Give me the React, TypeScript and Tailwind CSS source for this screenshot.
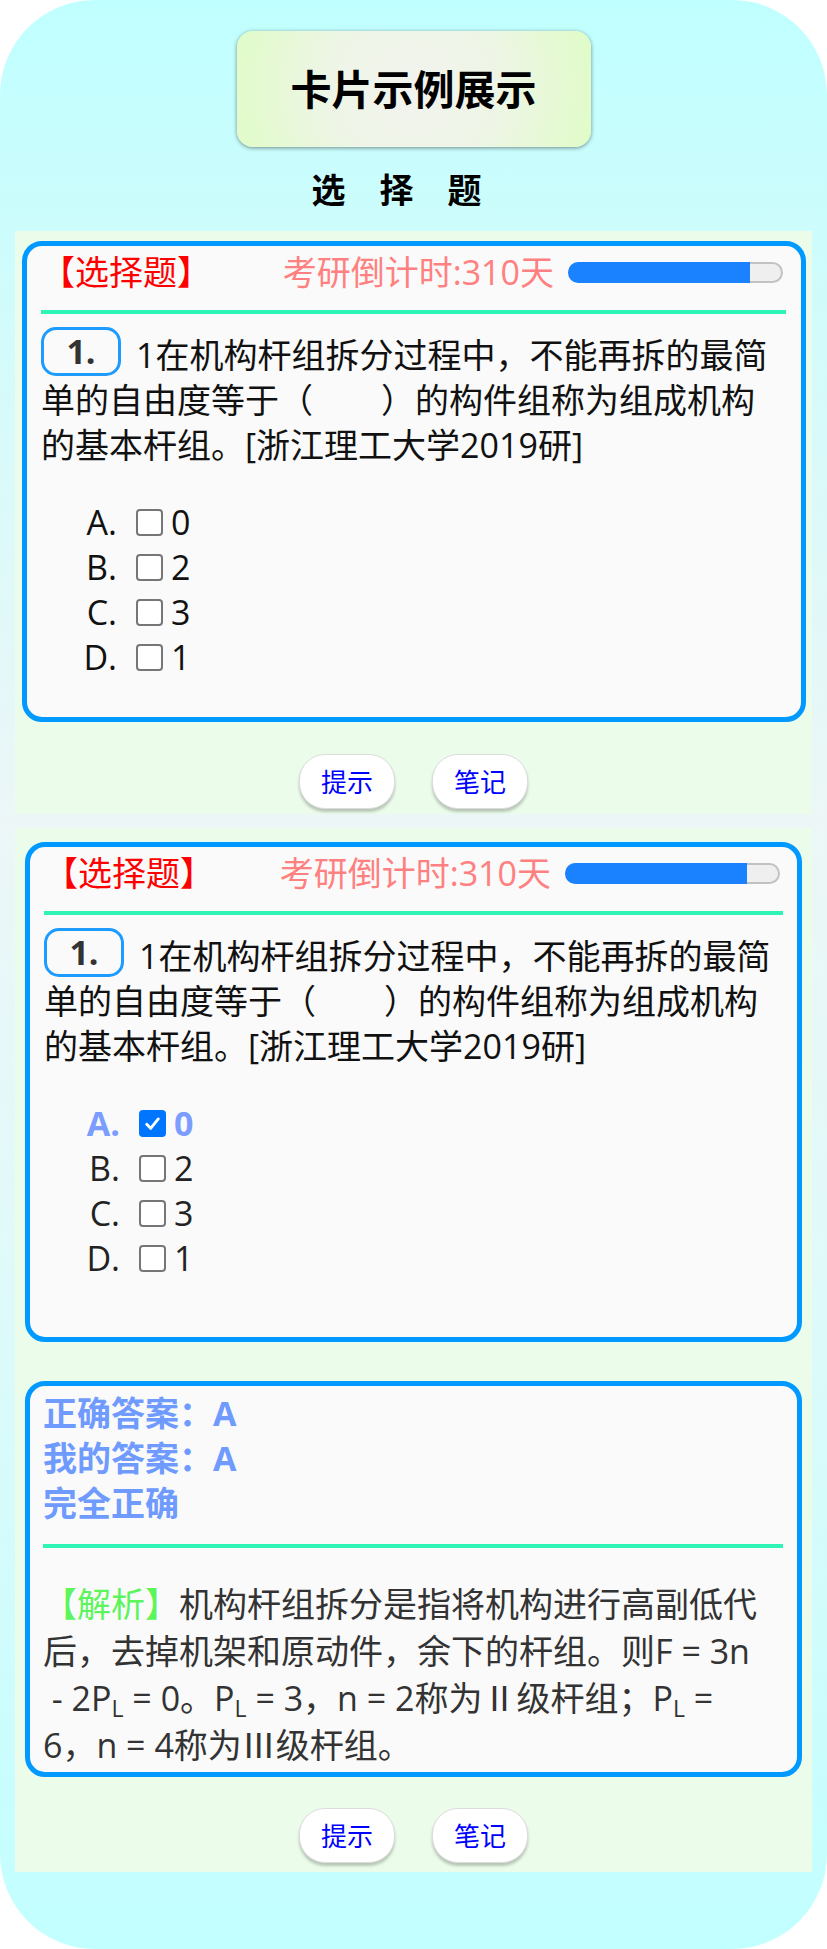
import React from 'react';

interface Option {
  key: string;
  text: string;
}

const OPTIONS: Option[] = [
  { key: 'A', text: '0' },
  { key: 'B', text: '2' },
  { key: 'C', text: '3' },
  { key: 'D', text: '1' },
];

const CheckBox: React.FC<{ checked?: boolean }> = ({ checked }) => {
  if (checked) {
    return (
      <span className="ml-[19px] flex h-[27px] w-[27px] shrink-0 items-center justify-center rounded-[4px] bg-[#0075ff]">
        <svg viewBox="0 0 16 16" className="h-[21px] w-[21px]">
          <path
            d="M3.6 8.6l3 3.1 5.8-7.2"
            fill="none"
            stroke="#fff"
            strokeWidth="2.2"
            strokeLinecap="round"
            strokeLinejoin="round"
          />
        </svg>
      </span>
    );
  }
  return (
    <span className="ml-[19px] block h-[27px] w-[27px] shrink-0 rounded-[4px] border-2 border-[#767676] bg-white" />
  );
};

const CardHeader: React.FC = () => (
  <div className="flex h-[52px] items-center justify-between text-[34px] leading-[45px]">
    <span className="text-[#ff0000]">【选择题】</span>
    <div className="mr-[3px] flex items-center">
      <span className="text-[#ff8080]">考研倒计时:310天</span>
      <div className="relative ml-[14px] h-[21px] w-[215px] rounded-full border-2 border-[#c2c2c2] bg-[#efefef]">
        <div className="absolute -left-[2px] -top-[2px] h-[21px] w-[182px] rounded-l-full bg-[#1a82ff]" />
      </div>
    </div>
  </div>
);

interface QuestionCardProps {
  answered?: boolean;
}

const QuestionCard: React.FC<QuestionCardProps> = ({ answered }) => {
  return (
    <>
      <CardHeader />
      <div className="mt-[12px] h-[4px] bg-[#2ef5b6]" />
      <div className="mt-[13px] text-[34px] leading-[45px] text-[#111]">
        <p>
          <span className="mr-[15px] inline-block h-[49px] w-[80px] rounded-[15px] border-[3px] border-[#1d9bff] text-center align-[4px] text-[34px] font-bold leading-[43px] text-[#333]">
            1.
          </span>
          <span>1在机构杆组拆分过程中，不能再拆的最简</span>
        </p>
        <p>单的自由度等于（　　）的构件组称为组成机构的基本杆组。[浙江理工大学2019研]</p>
      </div>
      <div className="mt-[32px] text-[34px] leading-[45px]">
        {OPTIONS.map((o) => {
          const picked = answered && o.key === 'A';
          return (
            <div
              key={o.key}
              className={`flex h-[45px] items-center ${picked ? 'font-bold text-[#7b9dff]' : answered ? 'text-[#222]' : 'text-[#111]'}`}
            >
              <span className="w-[76px] text-right">{o.key}.</span>
              <CheckBox checked={picked} />
              <span className="ml-[8px]">{o.text}</span>
            </div>
          );
        })}
      </div>
    </>
  );
};

const ActionButtons: React.FC = () => (
  <div className="flex justify-center gap-[37px]">
    {['提示', '笔记'].map((label) => (
      <button
        key={label}
        className="flex h-[55px] w-[96px] items-center justify-center rounded-[26px] border border-[#dcdcdc] bg-white text-[26px] leading-none text-[#0000ff] shadow-[0_3px_3px_rgba(0,0,0,0.22)]"
      >
        {label}
      </button>
    ))}
  </div>
);

export default function App() {
  return (
    <div className="w-[827px] font-['Open_Sans','Noto_Sans_CJK_SC',sans-serif]">
      <div className="flex h-[1949px] flex-col items-center rounded-[95px] bg-[linear-gradient(180deg,#c0ffff_0%,#d4fbfb_18%,#ecf6f6_42%,#e2f9f9_62%,#d2fcfc_82%,#c2ffff_100%)] pt-[31px]">
        <div className="flex h-[116px] w-[354px] items-center justify-center rounded-[16px] bg-[radial-gradient(circle,#f2f3ee_0%,#eef5e6_45%,#e0fcc8_100%)] shadow-[0_1px_4px_rgba(0,0,0,0.45)]">
          <h1 className="text-[41px] font-bold leading-none text-black">卡片示例展示</h1>
        </div>

        <h2 className="mt-[23px] h-[40px] text-[34px] font-bold leading-[40px] tracking-[34px] text-black">
          选择题
        </h2>

        <section className="mt-[21px] w-[797px] bg-[#ebfdea] pb-[5px] pt-[10px]">
          <div className="ml-[7px] w-[784px] rounded-[20px] border-[5px] border-[#0099ff] bg-[#fafafa] pb-[37px] pl-[14px] pr-[15px]">
            <QuestionCard />
          </div>
          <div className="mt-[32px]">
            <ActionButtons />
          </div>
        </section>

        <section className="mt-[14px] w-[797px] bg-[#ebfdea] pb-[9px] pt-[14px]">
          <div className="ml-[10px] w-[777px] rounded-[20px] border-[5px] border-[#0099ff] bg-[#fafafa] pb-[56px] pl-[14px] pr-[14px]">
            <QuestionCard answered />
          </div>

          <div className="ml-[10px] mt-[39px] w-[777px] rounded-[20px] border-[5px] border-[#0099ff] bg-[#fafafa] pb-[3px] pl-[13px] pr-[14px] pt-[5px]">
            <div className="text-[34px] font-bold leading-[45px] text-[#6f9bff]">
              <p>正确答案：A</p>
              <p>我的答案：A</p>
              <p>完全正确</p>
            </div>
            <div className="mt-[18px] h-[4px] bg-[#2ef5b6]" />
            <p className="mt-[33px] text-[34px] leading-[47px] text-[#333]">
              <span className="text-[#5cf55c]">【解析】</span>
              机构杆组拆分是指将机构进行高副低代
              <br />
              后，去掉机架和原动件，余下的杆组。则F = 3n
              <br />
              {'\u00a0'}- 2P<sub className="text-[23px]">L</sub> = 0。P<sub className="text-[23px]">L</sub> = 3，n = 2称为Ⅱ级杆组；P
              <sub className="text-[23px]">L</sub> =
              <br />
              6，n = 4称为Ⅲ级杆组。
            </p>
          </div>

          <div className="mt-[31px]">
            <ActionButtons />
          </div>
        </section>
      </div>
    </div>
  );
}
